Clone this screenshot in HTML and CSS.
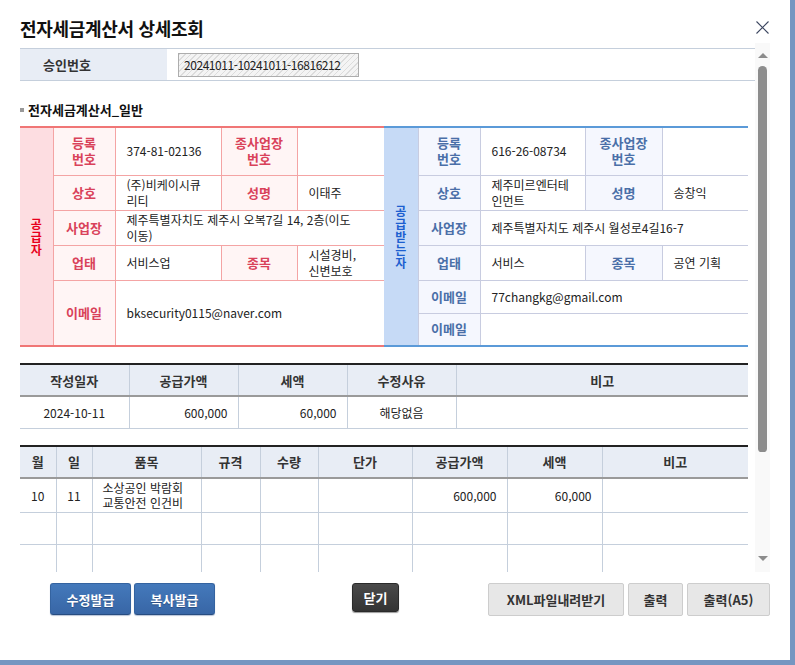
FILE: index.html
```html
<!DOCTYPE html>
<html lang="ko">
<head>
    <meta charset="UTF-8">
    <meta name="viewport" content="width=device-width, initial-scale=1.0">
    <title>전자세금계산서 상세조회</title>
    <link rel="stylesheet" href="styles.css">
</head>
<body>
    <div class="dialog">
        <div class="dlg-head">
            <h1 class="dlg-title">전자세금계산서 상세조회</h1>
            <button class="dlg-close" aria-label="닫기">
                <svg width="13" height="13" viewBox="0 0 13 13"><path d="M0.5 0.5L12.5 12.5M12.5 0.5L0.5 12.5" stroke="#3c4660" stroke-width="1.1" fill="none"/></svg>
            </button>
        </div>

        <div class="scroll-wrap">
            <div class="scroll-body">
                <div class="approval">
                    <div class="approval-label">승인번호</div>
                    <div class="approval-value"><span class="ro-input">20241011-10241011-16816212</span></div>
                </div>

                <h2 class="sec-title">전자세금계산서_일반</h2>

                <div class="party-wrap">
                    <table class="party supplier">
                        <colgroup>
                            <col class="c-side"><col class="c-lab"><col class="c-val"><col class="c-lab2"><col class="c-val2">
                        </colgroup>
                        <tr class="r-tall">
                            <th class="side" rowspan="5"><span class="side-txt">공<br>급<br>자</span></th>
                            <th>등록<br>번호</th>
                            <td>374-81-02136</td>
                            <th>종사업장<br>번호</th>
                            <td></td>
                        </tr>
                        <tr class="r-mid">
                            <th>상호</th>
                            <td>(주)비케이시큐<br>리티</td>
                            <th>성명</th>
                            <td>이태주</td>
                        </tr>
                        <tr class="r-mid">
                            <th>사업장</th>
                            <td colspan="3">제주특별자치도 제주시 오복7길 14, 2층(이도<br>이동)</td>
                        </tr>
                        <tr class="r-mid">
                            <th>업태</th>
                            <td>서비스업</td>
                            <th>종목</th>
                            <td>시설경비,<br>신변보호</td>
                        </tr>
                        <tr class="r-mail">
                            <th>이메일</th>
                            <td colspan="3">bksecurity0115@naver.com</td>
                        </tr>
                    </table>

                    <table class="party buyer">
                        <colgroup>
                            <col class="c-side b"><col class="c-lab"><col class="c-val b"><col class="c-lab2 b"><col class="c-val2 b">
                        </colgroup>
                        <tr class="r-tall">
                            <th class="side" rowspan="6"><span class="side-txt">공<br>급<br>받<br>는<br>자</span></th>
                            <th>등록<br>번호</th>
                            <td>616-26-08734</td>
                            <th>종사업장<br>번호</th>
                            <td></td>
                        </tr>
                        <tr class="r-mid">
                            <th>상호</th>
                            <td>제주미르엔터테<br>인먼트</td>
                            <th>성명</th>
                            <td>송창익</td>
                        </tr>
                        <tr class="r-mid">
                            <th>사업장</th>
                            <td colspan="3">제주특별자치도 제주시 월성로4길16-7</td>
                        </tr>
                        <tr class="r-mid">
                            <th>업태</th>
                            <td>서비스</td>
                            <th>종목</th>
                            <td>공연 기획</td>
                        </tr>
                        <tr class="r-short">
                            <th>이메일</th>
                            <td colspan="3">77changkg@gmail.com</td>
                        </tr>
                        <tr class="r-short">
                            <th>이메일</th>
                            <td colspan="3"></td>
                        </tr>
                    </table>
                </div>

                <table class="grid summary">
                    <colgroup>
                        <col class="s-col"><col class="s-col"><col class="s-col"><col class="s-col"><col>
                    </colgroup>
                    <tr class="g-head">
                        <th>작성일자</th><th>공급가액</th><th>세액</th><th>수정사유</th><th>비고</th>
                    </tr>
                    <tr class="g-row">
                        <td class="ac">2024-10-11</td>
                        <td class="ar">600,000</td>
                        <td class="ar">60,000</td>
                        <td class="ac">해당없음</td>
                        <td></td>
                    </tr>
                </table>

                <table class="grid items">
                    <colgroup>
                        <col class="i-day"><col class="i-day"><col class="i-name"><col class="i-spec"><col class="i-qty"><col class="i-price"><col class="i-amt"><col class="i-amt"><col>
                    </colgroup>
                    <tr class="g-head">
                        <th>월</th><th>일</th><th>품목</th><th>규격</th><th>수량</th><th>단가</th><th>공급가액</th><th>세액</th><th>비고</th>
                    </tr>
                    <tr class="g-row tall">
                        <td class="ac">10</td>
                        <td class="ac">11</td>
                        <td>소상공인 박람회<br>교통안전 인건비</td>
                        <td></td><td></td><td></td>
                        <td class="ar">600,000</td>
                        <td class="ar">60,000</td>
                        <td></td>
                    </tr>
                    <tr class="g-row"><td></td><td></td><td></td><td></td><td></td><td></td><td></td><td></td><td></td></tr>
                    <tr class="g-row"><td></td><td></td><td></td><td></td><td></td><td></td><td></td><td></td><td></td></tr>
                    <tr class="g-row"><td></td><td></td><td></td><td></td><td></td><td></td><td></td><td></td><td></td></tr>
                </table>
            </div>
            <div class="scrollbar">
                <span class="sb-up"></span>
                <span class="sb-thumb"></span>
                <span class="sb-down"></span>
            </div>
        </div>

        <div class="btn-row">
            <div class="btn-group">
                <button class="btn btn-blue">수정발급</button>
                <button class="btn btn-blue">복사발급</button>
            </div>
            <button class="btn btn-dark">닫기</button>
            <div class="btn-group right">
                <button class="btn btn-gray w-xml">XML파일내려받기</button>
                <button class="btn btn-gray w-print">출력</button>
                <button class="btn btn-gray w-a5">출력(A5)</button>
            </div>
        </div>
    </div>
</body>
</html>
```

FILE: styles.css
```css
body {
    margin: 0;
    padding: 0;
    background: #fff;
    font-family: "Noto Sans CJK KR", "Noto Sans", sans-serif;
    font-size: 12px;
    color: #222;
}

.dialog {
    width: 790px;
    height: 660px;
    border-right: 5px solid #7596c1;
    border-bottom: 5px solid #7596c1;
    background: #fff;
}

/* header */
.dlg-head {
    height: 43px;
    box-sizing: border-box;
    padding: 17px 21px 0 20px;
    display: flex;
    justify-content: space-between;
    align-items: flex-start;
}

.dlg-title {
    margin: 0;
    font-size: 18px;
    line-height: 22px;
    font-weight: bold;
    color: #111;
    letter-spacing: -0.3px;
}

.dlg-close {
    border: 0;
    background: none;
    padding: 0;
    margin-top: 4px;
    width: 13px;
    height: 13px;
    display: flex;
}

/* scroll area */
.scroll-wrap {
    display: flex;
    margin-left: 20px;
    height: 529px;
}

.scroll-body {
    width: 735px;
    height: 529px;
    overflow: hidden;
    padding-top: 5px;
    box-sizing: border-box;
}

.scrollbar {
    width: 15px;
    background: #f9f9f9;
    display: flex;
    flex-direction: column;
    align-items: center;
}

.sb-up {
    margin-top: 10px;
    width: 0;
    height: 0;
    border-left: 5px solid transparent;
    border-right: 5px solid transparent;
    border-bottom: 5px solid #8c8c8c;
}

.sb-thumb {
    margin-top: 8px;
    width: 9px;
    height: 386px;
    background: #8c8c8c;
    border-radius: 5px 5px 4px 4px;
}

.sb-down {
    margin-top: auto;
    margin-bottom: 11px;
    width: 0;
    height: 0;
    border-left: 5px solid transparent;
    border-right: 5px solid transparent;
    border-top: 5px solid #8c8c8c;
}

/* approval number */
.approval {
    display: flex;
    height: 33px;
    box-sizing: border-box;
    border-top: 1px solid #c5cfdc;
    border-bottom: 1px solid #c5cfdc;
}

.approval-label {
    width: 147px;
    background: #e8edf5;
    font-size: 13px;
    font-weight: bold;
    color: #333;
    padding-left: 23px;
    box-sizing: border-box;
    line-height: 31px;
}

.approval-value {
    padding-left: 11px;
    display: flex;
    align-items: center;
}

.ro-input {
    width: 181px;
    height: 24px;
    box-sizing: border-box;
    border: 1px solid #adadad;
    padding-left: 5px;
    line-height: 22px;
    color: #222;
    letter-spacing: -0.45px;
    white-space: nowrap;
    overflow: hidden;
    background-color: #f4f4f4;
    background-image: repeating-linear-gradient(135deg, #dcdcdc 0 1px, transparent 1px 4px);
}

.sec-title {
    margin: 20px 0 8px 0;
    font-size: 13px;
    line-height: 17px;
    font-weight: bold;
    color: #111;
    display: flex;
    align-items: center;
}

.sec-title::before {
    content: "";
    width: 4px;
    height: 4px;
    background: #999;
    margin-right: 4px;
}

/* supplier / buyer */
.party-wrap {
    display: flex;
    width: 728px;
}

.party {
    width: 364px;
    border-collapse: collapse;
    table-layout: fixed;
}

.party th,
.party td {
    padding: 0;
    line-height: 16px;
}

.party td {
    padding: 0 8px 0 11px;
    text-align: left;
    vertical-align: middle;
    color: #222;
}

.party th {
    font-size: 13px;
    font-weight: bold;
    text-align: center;
}

.c-side { width: 33px; }
.c-lab { width: 62px; }
.c-val { width: 106px; }
.c-lab2 { width: 76px; }
.c-val2 { width: 87px; }
.c-side.b { width: 34px; }
.c-val.b { width: 105px; }
.c-lab2.b { width: 77px; }
.c-val2.b { width: 86px; }

.r-tall { height: 48px; }
.r-mid { height: 35px; }
.r-mail { height: 66px; }
.r-short { height: 33px; }

.supplier {
    border-top: 2px solid #f07676;
    border-bottom: 2px solid #f07676;
}

.supplier th,
.supplier td {
    border: 1px solid #f4a4a4;
}

.supplier th {
    background: #fff5f5;
    color: #d9425a;
}

.supplier th.side {
    background: #fddde1;
    color: #e8001c;
    border-left: 0;
}

.supplier tr > *:last-child {
    border-right: 0;
}

.buyer {
    border-top: 2px solid #5b9ad8;
    border-bottom: 2px solid #5b9ad8;
}

.buyer th,
.buyer td {
    border: 1px solid #c8cce0;
}

.buyer th {
    background: #f5f7fe;
    color: #4a6fa8;
}

.buyer th.side {
    background: #c6daf6;
    color: #1c5fd0;
    border-left: 0;
}

.buyer tr > *:last-child {
    border-right: 0;
}

.side-txt {
    display: block;
    font-size: 12px;
    line-height: 13px;
}

/* grids */
.grid {
    width: 728px;
    border-collapse: collapse;
    table-layout: fixed;
    margin-top: 16px;
    border-top: 2px solid #222;
}

.grid th,
.grid td {
    padding: 0 10px;
    border-left: 1px solid #c5cfdc;
    border-bottom: 1px solid #c5cfdc;
    line-height: 15px;
    color: #222;
}

.grid tr > *:first-child {
    border-left: 0;
}

.grid th {
    background: #e8edf5;
    font-size: 13px;
    font-weight: bold;
    color: #333;
    text-align: center;
    border-bottom: 2px solid #9a9a9a;
}

.g-head { height: 32px; }
.g-row { height: 32px; }
.g-row.tall { height: 35px; }

.ac { text-align: center; }
.ar { text-align: right; }

.s-col { width: 109px; }
.i-day { width: 36px; }
.i-name { width: 109px; }
.i-spec { width: 59px; }
.i-qty { width: 58px; }
.i-price { width: 94px; }
.i-amt { width: 95px; }

/* buttons */
.btn-row {
    display: flex;
    align-items: flex-start;
    margin-top: 11px;
    padding: 0 20px 0 50px;
}

.btn-group {
    display: flex;
    gap: 3px;
}

.btn-group.right {
    margin-left: auto;
    gap: 4px;
}

.btn {
    font-family: "Noto Sans CJK KR", "Noto Sans", sans-serif;
    font-size: 13px;
    font-weight: bold;
    cursor: pointer;
    padding: 0;
}

.btn-blue {
    width: 81px;
    height: 32px;
    color: #fff;
    background: linear-gradient(#4479bb, #3866a6);
    border: 1px solid #3463a0;
    border-bottom-color: #274c80;
    border-radius: 3px;
    box-shadow: 0 1px 1px #b8c4d8;
    text-shadow: 0 1px 0 #2a4f85;
}

.btn-dark {
    margin-left: 137px;
    width: 47px;
    height: 29px;
    color: #fff;
    background: linear-gradient(#4a4a4a, #333);
    border: 1px solid #2a2a2a;
    border-radius: 3px;
    box-shadow: 0 1px 1px #999;
}

.btn-gray {
    height: 33px;
    color: #333;
    background: #e7e7e7;
    border: 1px solid #cdcdcd;
    border-radius: 2px;
}

.w-xml { width: 136px; }
.w-print { width: 55px; }
.w-a5 { width: 83px; }
```
